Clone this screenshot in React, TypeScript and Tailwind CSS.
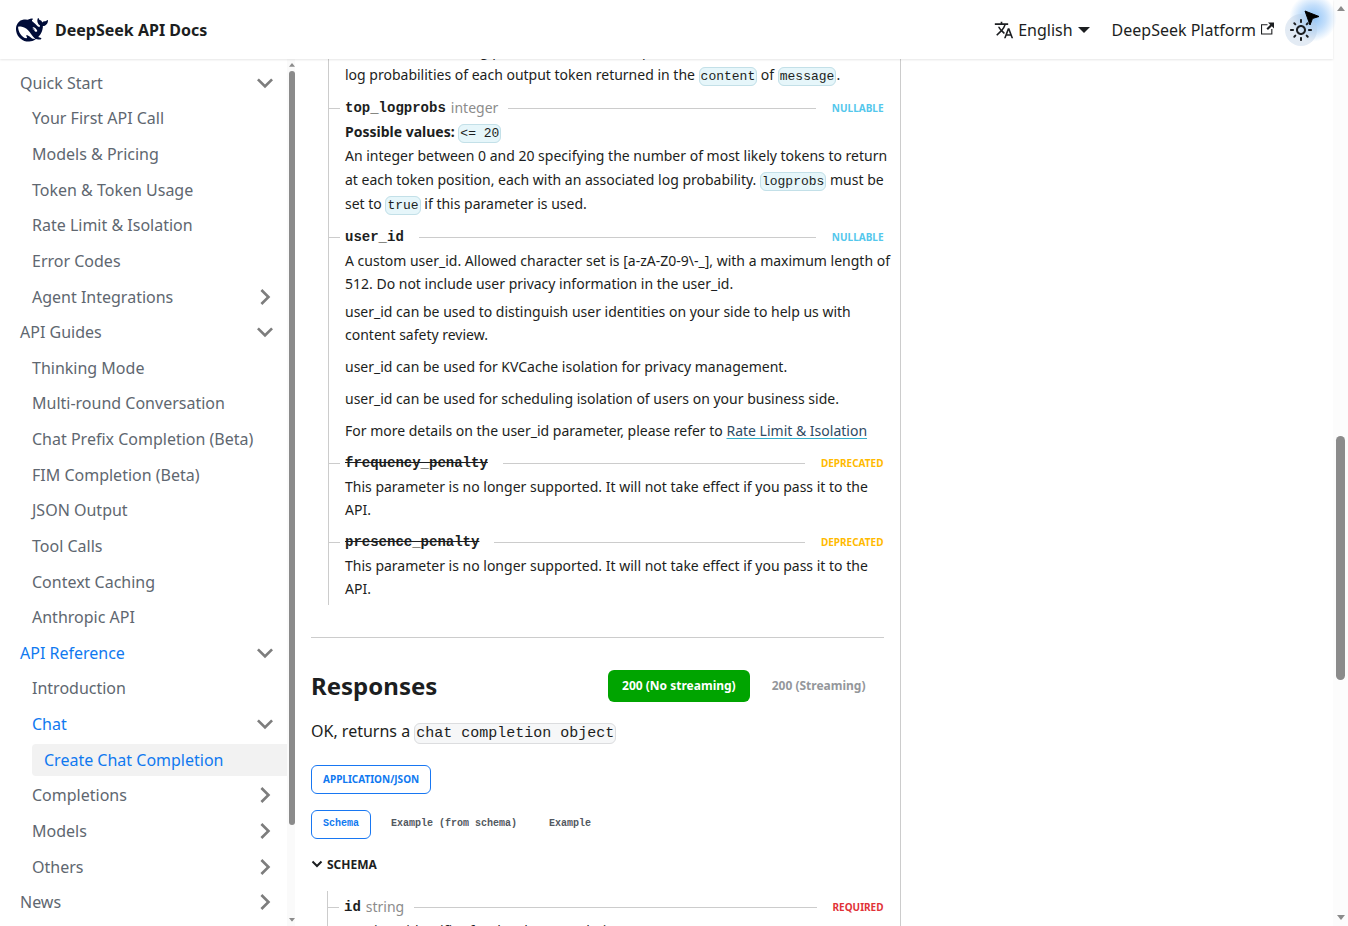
import React, { useState } from "react";
import clsx from "clsx";
import { MdOutlineLightMode, MdTranslate } from "react-icons/md";

type MenuItem = {
  label: string;
  level: 0 | 1 | 2;
  caret?: "open" | "closed";
  active?: boolean;
  current?: boolean;
};

const menu: MenuItem[] = [
  { label: "Quick Start", level: 0, caret: "open" },
  { label: "Your First API Call", level: 1 },
  { label: "Models & Pricing", level: 1 },
  { label: "Token & Token Usage", level: 1 },
  { label: "Rate Limit & Isolation", level: 1 },
  { label: "Error Codes", level: 1 },
  { label: "Agent Integrations", level: 1, caret: "closed" },
  { label: "API Guides", level: 0, caret: "open" },
  { label: "Thinking Mode", level: 1 },
  { label: "Multi-round Conversation", level: 1 },
  { label: "Chat Prefix Completion (Beta)", level: 1 },
  { label: "FIM Completion (Beta)", level: 1 },
  { label: "JSON Output", level: 1 },
  { label: "Tool Calls", level: 1 },
  { label: "Context Caching", level: 1 },
  { label: "Anthropic API", level: 1 },
  { label: "API Reference", level: 0, caret: "open", active: true },
  { label: "Introduction", level: 1 },
  { label: "Chat", level: 1, caret: "open", active: true },
  { label: "Create Chat Completion", level: 2, active: true, current: true },
  { label: "Completions", level: 1, caret: "closed" },
  { label: "Models", level: 1, caret: "closed" },
  { label: "Others", level: 1, caret: "closed" },
  { label: "News", level: 0, caret: "closed" },
];

function Logo() {
  return (
    <svg viewBox="0 3 24 18" className="h-6 w-8 fill-[#000c38]" aria-hidden="true">
      <path d="M23.748 4.482c-.254-.124-.364.113-.512.234-.051.039-.094.09-.137.136-.372.397-.806.657-1.373.626-.829-.046-1.537.214-2.163.848-.133-.782-.575-1.248-1.247-1.548-.352-.156-.708-.311-.955-.65-.172-.241-.219-.51-.305-.774-.055-.16-.11-.323-.293-.35-.2-.031-.278.136-.356.276-.313.572-.434 1.202-.422 1.84.027 1.436.633 2.58 1.838 3.393.137.093.172.187.129.323-.082.28-.18.552-.266.833-.055.179-.137.217-.329.14a5.526 5.526 0 01-1.736-1.18c-.857-.828-1.631-1.742-2.597-2.458a11.365 11.365 0 00-.689-.471c-.985-.957.13-1.743.388-1.836.27-.098.093-.432-.779-.428-.872.004-1.67.295-2.687.684a3.055 3.055 0 01-.465.137 9.597 9.597 0 00-2.883-.102c-1.885.21-3.39 1.102-4.497 2.623C.082 8.606-.231 10.684.152 12.85c.403 2.284 1.569 4.175 3.36 5.653 1.858 1.533 3.997 2.284 6.438 2.14 1.482-.085 3.133-.284 4.994-1.86.47.234.962.327 1.78.397.63.059 1.236-.03 1.705-.128.735-.156.684-.837.419-.961-2.155-1.004-1.682-.595-2.113-.926 1.096-1.296 2.746-2.642 3.392-7.003.05-.347.007-.565 0-.845-.004-.17.035-.237.23-.256a4.173 4.173 0 001.545-.475c1.396-.763 1.96-2.015 2.093-3.517.02-.23-.004-.467-.247-.588zM11.581 18c-2.089-1.642-3.102-2.183-3.52-2.16-.392.024-.321.471-.235.763.09.288.207.486.371.739.114.167.192.416-.113.603-.673.416-1.842-.14-1.897-.167-1.361-.802-2.5-1.86-3.301-3.307-.774-1.393-1.224-2.887-1.298-4.482-.02-.386.093-.522.477-.592a4.696 4.696 0 011.529-.039c2.132.312 3.946 1.265 5.468 2.774.868.86 1.525 1.887 2.202 2.891.72 1.066 1.494 2.082 2.48 2.914.348.292.625.514.891.677-.802.09-2.14.11-3.054-.614zm1-6.44a.306.306 0 01.415-.287.302.302 0 01.2.288.306.306 0 01-.31.307.303.303 0 01-.304-.308zm3.11 1.596c-.2.081-.399.151-.59.16a1.245 1.245 0 01-.798-.254c-.274-.23-.47-.358-.552-.758a1.73 1.73 0 01.016-.588c.07-.327-.008-.537-.239-.727-.187-.156-.426-.199-.688-.199a.559.559 0 01-.254-.078c-.11-.054-.2-.19-.114-.358.028-.054.16-.186.192-.21.356-.202.767-.136 1.146.016.352.144.618.408 1.001.782.391.451.462.576.685.914.176.265.336.537.445.848.067.195-.019.354-.25.452z" />
    </svg>
  );
}

function Caret({ className }: { className?: string }) {
  return (
    <svg viewBox="0 0 24 24" className={className} fill="currentColor" aria-hidden="true">
      <path d="M7.41 15.41 12 10.83l4.59 4.58L18 14l-6-6-6 6z" />
    </svg>
  );
}

function Triangle({ down }: { down?: boolean }) {
  return (
    <svg viewBox="0 0 8 5" className={clsx("w-full fill-[#8b8b8b]", down && "rotate-180")} aria-hidden="true">
      <path d="M4 0 8 5H0z" />
    </svg>
  );
}

function Header() {
  return (
    <header className="relative z-10 flex h-[59px] shrink-0 items-center justify-between bg-white px-4 shadow-[0_1px_2px_rgba(0,0,0,0.1)]">
      <a href="#" className="flex items-center gap-[7px] font-bold">
        <Logo />
        DeepSeek API Docs
      </a>
      <div className="flex items-center">
        <button type="button" className="flex items-center">
          <MdTranslate className="mr-1 size-5" />
          English
          <svg viewBox="0 0 12 6" className="ml-[5px] h-[6px] w-3 fill-current" aria-hidden="true">
            <path d="M0 0h12L6 6z" />
          </svg>
        </button>
        <a href="#" className="ml-[22px] flex items-center">
          DeepSeek Platform
          <svg viewBox="0 0 24 24" className="mb-[2px] ml-[5px] size-[13px] fill-current" aria-hidden="true">
            <path d="M21 13v10h-21v-19h12v2h-10v15h17v-8h2zm3-12h-10.988l4.035 4-6.977 7.07 2.828 2.828 6.977-7.07 4.125 4.172v-11z" />
          </svg>
        </a>
        <div className="relative ml-[11px]">
          {/* pointer halo */}
          <div className="absolute -top-5 -right-5 size-12 rounded-full bg-[radial-gradient(circle,#8fc3f7_0%,#c4dffb_38%,transparent_70%)]" />
          <button
            type="button"
            aria-label="Switch between dark and light mode"
            className="relative flex size-8 items-center justify-center rounded-full bg-[#b9cde4]/40"
          >
            <MdOutlineLightMode className="size-6" />
          </button>
          <svg viewBox="0 0 16 16" className="absolute -top-1 -right-[3px] size-4" aria-hidden="true">
            <path d="M1 1 15 6.500 8.500 8.500 6 15z" fill="#000" stroke="#000" strokeLinejoin="round" />
          </svg>
        </div>
      </div>
    </header>
  );
}

function Sidebar() {
  return (
    <aside className="flex w-[295px] shrink-0">
      <nav aria-label="Docs sidebar" className="flex-1 py-[6px] pl-2">
        <ul className="flex h-full flex-col">
          {menu.map((item) => (
            <li
              key={item.label}
              className={clsx(
                "flex flex-1 items-center",
                item.level === 1 && "pl-3",
                item.level === 2 && "pl-6"
              )}
            >
              <div
                className={clsx(
                  "flex h-8 w-full items-center rounded-l",
                  item.current && "bg-[#f2f2f2]"
                )}
              >
                <a
                  href="#"
                  className={clsx(
                    "flex-1 pl-3 whitespace-nowrap",
                    item.active ? "text-[#1079f0]" : "text-[#606770]"
                  )}
                >
                  {item.label}
                </a>
                {item.caret && (
                  <button type="button" aria-label={`Toggle ${item.label}`} className="mr-[6px]">
                    <Caret
                      className={clsx(
                        "size-8 text-[#7d7d7d]",
                        item.caret === "open" ? "rotate-180" : "rotate-90"
                      )}
                    />
                  </button>
                )}
              </div>
            </li>
          ))}
        </ul>
      </nav>
      <div className="flex w-2 flex-col items-end bg-[#fafafa] py-1">
        <div className="w-[6px]">
          <Triangle />
        </div>
        <div className="mt-1 flex-1">
          <div className="h-[89%] w-[6px] rounded-full bg-[#8b8b8b]" />
        </div>
        <div className="w-[6px]">
          <Triangle down />
        </div>
      </div>
    </aside>
  );
}

function Code({ children }: { children: React.ReactNode }) {
  return (
    <code className="rounded-md border border-[#c3e0e8] bg-[#e6f6fa] px-px py-px font-['Liberation_Mono',monospace] text-[13px] leading-none">
      {children}
    </code>
  );
}

type PropertyProps = {
  name: string;
  type?: string;
  badge: "nullable" | "deprecated" | "required";
  children: React.ReactNode;
};

function Property({ name, type, badge, children }: PropertyProps) {
  return (
    <div className="mt-[9px] first:mt-0">
      <div className="flex h-6 items-center">
        {/* branch of the tree */}
        <span className="-ml-4 mr-[5px] h-px w-[11px] bg-[#ccc]" />
        <strong
          className={clsx(
            "font-['Liberation_Mono',monospace] text-sm",
            badge === "deprecated" && "line-through"
          )}
        >
          {name}
        </strong>
        <span className="ml-[5px] text-sm text-[#8c8c8c]">{type}</span>
        <span className="mr-4 ml-[10px] h-px flex-1 bg-[#ccc]" />
        <span
          className={clsx(
            "text-[10px] font-bold uppercase",
            badge === "nullable" && "text-[#54c7ec]",
            badge === "deprecated" && "text-[#ffba00]",
            badge === "required" && "text-[#e13238]"
          )}
        >
          {badge}
        </span>
      </div>
      <div className="-mr-2">{children}</div>
    </div>
  );
}

const schemaTabs = ["Schema", "Example (from schema)", "Example"];
const statusTabs = ["200 (No streaming)", "200 (Streaming)"];

function Responses() {
  const [status, setStatus] = useState(statusTabs[0]);
  const [tab, setTab] = useState(schemaTabs[0]);

  return (
    <section>
      <div className="mt-8 flex items-center justify-between">
        <h2 className="text-2xl font-bold">Responses</h2>
        <div role="tablist" className="mr-1 flex gap-2">
          {statusTabs.map((itm) => (
            <button
              key={itm}
              type="button"
              role="tab"
              aria-selected={status === itm}
              onClick={() => setStatus(itm)}
              className={clsx(
                "h-8 rounded-md px-[14px] text-xs font-bold",
                status === itm ? "bg-[#00a400] text-white" : "text-[#94979b]"
              )}
            >
              {itm}
            </button>
          ))}
        </div>
      </div>
      <p className="mt-[15px] leading-7">
        OK, returns a{" "}
        <code className="rounded-md border border-[#dcdddf] bg-[#f6f7f8] px-px py-px font-['Liberation_Mono',monospace] text-[15px] leading-none">
          chat completion object
        </code>
      </p>
      <div role="tablist" className="mt-5 flex">
        <button
          type="button"
          role="tab"
          aria-selected="true"
          className="h-[29px] rounded-md border border-[#1877f2] px-[11px] text-[10px] font-bold text-[#1079f0] uppercase"
        >
          application/json
        </button>
      </div>
      <div role="tablist" className="mt-4 flex gap-2">
        {schemaTabs.map((itm) => (
          <button
            key={itm}
            type="button"
            role="tab"
            aria-selected={tab === itm}
            onClick={() => setTab(itm)}
            className={clsx(
              "h-[29px] rounded-md border px-[11px] pb-[3px] font-['Liberation_Mono',monospace] text-[10px] font-bold",
              tab === itm
                ? "border-[#1877f2] text-[#1079f0]"
                : "border-transparent text-[#525860]"
            )}
          >
            {itm}
          </button>
        ))}
      </div>
      <details open className="mt-[14px]">
        <summary className="flex h-6 list-none items-center gap-1 text-xs font-bold">
          <svg viewBox="0 0 12 8" className="mb-[2px] size-3" fill="none" stroke="currentColor" strokeWidth="2" aria-hidden="true">
            <path d="M1.500 1.500l4.500 4.500 4.500-4.500" />
          </svg>
          SCHEMA
        </summary>
        <div className="mt-[14px] ml-4 border-l border-[#ccc] pt-1 pl-4">
          <Property name="id" type="string" badge="required">
            <p className="text-sm leading-[23px]">A unique identifier for the chat completion.</p>
          </Property>
        </div>
      </details>
    </section>
  );
}

export default function App() {
  return (
    <div className="flex h-screen overflow-hidden bg-white font-['Noto_Sans',sans-serif] text-base text-[#1c1e21]">
      <div className="flex min-w-0 flex-1 flex-col">
        <Header />
        <div className="flex min-h-0 flex-1">
          <Sidebar />
          <main className="grid min-w-0 flex-1 grid-cols-[7fr_5fr] overflow-hidden">
            <div className="min-w-0 border-r border-[#ccc] px-4">
              <div className="-mt-5 ml-[17px] border-l border-[#ccc] pb-[5px] pl-4">
                <p className="-mr-2 text-sm leading-6">
                  Whether to return log probabilities of the output tokens or not. If true, returns
                  the log probabilities of each output token returned in the <Code>content</Code> of{" "}
                  <Code>message</Code>.
                </p>
                <Property name="top_logprobs" type="integer" badge="nullable">
                  <p className="text-sm leading-6">
                    <strong>Possible values:</strong> <Code>&lt;= 20</Code>
                  </p>
                  <p className="text-sm leading-6">
                    An integer between 0 and 20 specifying the number of most likely tokens to
                    return at each token position, each with an associated log probability.{" "}
                    <Code>logprobs</Code> must be set to <Code>true</Code> if this parameter is
                    used.
                  </p>
                </Property>
                <Property name="user_id" badge="nullable">
                  <div className="text-sm leading-[23px]">
                    <p>
                      A custom user_id. Allowed character set is [a-zA-Z0-9\-_], with a maximum
                      length of 512. Do not include user privacy information in the user_id.
                    </p>
                    <div className="mt-[5px] space-y-[9px]">
                      <p>
                        user_id can be used to distinguish user identities on your side to help us
                        with content safety review.
                      </p>
                      <p>user_id can be used for KVCache isolation for privacy management.</p>
                      <p>
                        user_id can be used for scheduling isolation of users on your business side.
                      </p>
                      <p>
                        For more details on the user_id parameter, please refer to{" "}
                        <a
                          href="#"
                          className="text-[#2f4a63] underline decoration-[#35b0cc] underline-offset-2"
                        >
                          Rate Limit &amp; Isolation
                        </a>
                      </p>
                    </div>
                  </div>
                </Property>
                <Property name="frequency_penalty" badge="deprecated">
                  <p className="text-sm leading-[23px]">
                    This parameter is no longer supported. It will not take effect if you pass it to
                    the API.
                  </p>
                </Property>
                <Property name="presence_penalty" badge="deprecated">
                  <p className="text-sm leading-[23px]">
                    This parameter is no longer supported. It will not take effect if you pass it to
                    the API.
                  </p>
                </Property>
              </div>
              <hr className="mt-8 border-[#ccc]" />
              <Responses />
            </div>
          </main>
        </div>
      </div>
      {/* page scrollbar */}
      <div className="flex w-[15px] shrink-0 flex-col items-center bg-[#fcfcfc] py-[6px]">
        <div className="w-2">
          <Triangle />
        </div>
        <div className="flex flex-1 flex-col">
          <div className="h-[47%]" />
          <div className="h-[27%] w-[9px] rounded-full bg-[#8b8b8b]" />
        </div>
        <div className="w-2">
          <Triangle down />
        </div>
      </div>
    </div>
  );
}
